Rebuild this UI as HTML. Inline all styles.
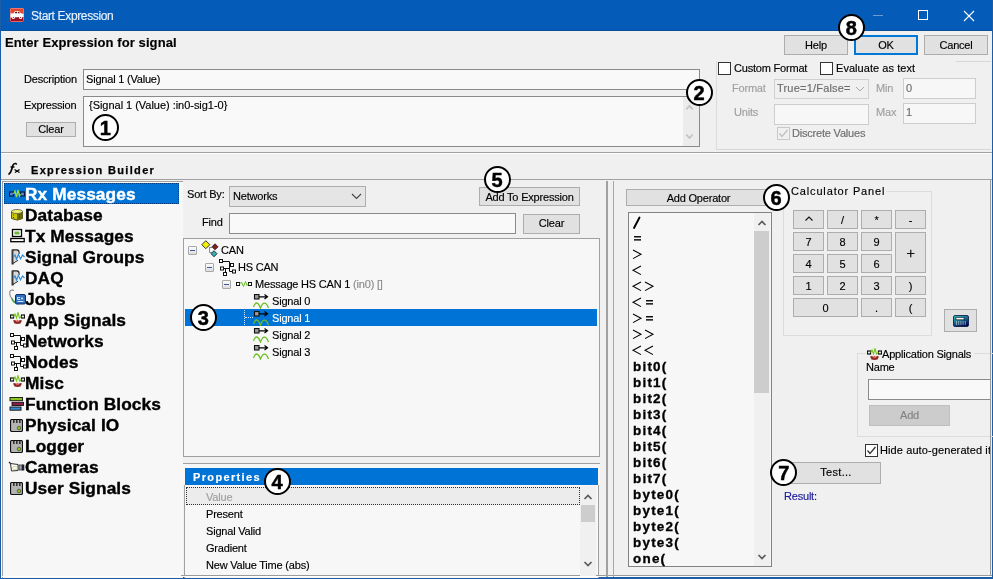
<!DOCTYPE html>
<html><head><meta charset="utf-8">
<style>
*{box-sizing:border-box;margin:0;padding:0}
html,body{width:993px;height:579px;overflow:hidden;background:#f0f0f0;font-family:"Liberation Sans",sans-serif;font-size:11px;color:#000}
.a{position:absolute}
body{will-change:transform}
.tx{position:absolute;white-space:nowrap;line-height:13px;font-size:11px;letter-spacing:-0.2px;-webkit-text-stroke:0.15px}
.btn{position:absolute;background:#e1e1e1;border:1px solid #adadad}
.inp{position:absolute;background:#f9f9f9;border:1px solid #8a8a8a}
.hl{position:absolute;background:#a0a0a0;height:1px}
.vl{position:absolute;background:#a0a0a0;width:1px}
.badge{position:absolute;width:27px;height:27px;border-radius:50%;border:2.5px solid #000;background:#fff;font:bold 20px "Liberation Sans",sans-serif;line-height:22px;padding-top:1px;text-align:center;color:#000;-webkit-text-stroke:0.5px #000}
.cb{position:absolute;width:13px;height:13px;border:1px solid #333;background:#fff}
</style></head><body>

<!-- window frame -->
<div class="a" style="left:0;top:0;width:993px;height:31px;background:#055cb8"></div><div class="a" style="left:0;top:30px;width:993px;height:1px;background:#0b4f9c"></div>
<div class="a" style="left:0;top:0;width:1px;height:579px;background:#1c5da8"></div>
<div class="a" style="left:992px;top:0;width:1px;height:579px;background:#1c5da8"></div>
<div class="a" style="left:0;top:577px;width:993px;height:2px;background:#1c5da8"></div>

<!-- title icon -->
<svg class="a" style="left:10px;top:8px" width="14" height="14" viewBox="0 0 14 14"><rect x="0" y="0" width="14" height="14" rx="1" fill="#e0482e"/><rect x="0" y="9" width="14" height="5" fill="#9c1020"/><rect x="0.5" y="0.5" width="13" height="13" rx="1" fill="none" stroke="#f08080" stroke-width="0.8"/><path d="M0.5 5.5L3.5 5.2L5 3L9 3L11 5.2L13.5 6L13.5 9L0.5 9.5Z" fill="#fff"/><path d="M5.5 3.7H7.2V5.3H4.6ZM8 3.7H9L10 5.3H8Z" fill="#5a1010"/><circle cx="3.3" cy="9.5" r="1.6" fill="#fff"/><circle cx="10.6" cy="9.5" r="1.6" fill="#fff"/><circle cx="3.3" cy="9.5" r="0.6" fill="#700"/><circle cx="10.6" cy="9.5" r="0.6" fill="#700"/></svg>
<div class="tx" style="left:31px;top:10px;font-size:12px;color:#e8f2ff;letter-spacing:-0.35px">Start Expression</div>
<div class="a" style="left:873px;top:15px;width:10px;height:1px;background:#6f9ad0"></div>
<div class="a" style="left:918px;top:10px;width:10px;height:10px;border:1px solid #fff"></div>


<!-- close X -->
<svg class="a" style="left:963px;top:10px" width="12" height="12" viewBox="0 0 12 12"><path d="M1 1L11 11M11 1L1 11" stroke="#fff" stroke-width="1.1"/></svg>

<!-- header -->
<div class="tx" style="left:5px;top:36px;font:bold 13px 'Liberation Sans';letter-spacing:0.1px;line-height:14px">Enter Expression for signal</div>
<div class="btn" style="left:784px;top:35px;width:64px;height:20px"></div>
<div class="tx" style="left:784px;top:39px;width:64px;text-align:center">Help</div>
<div class="btn" style="left:854px;top:35px;width:64px;height:20px;border:2px solid #0078d7"></div>
<div class="tx" style="left:854px;top:39px;width:64px;text-align:center">OK</div>
<div class="btn" style="left:924px;top:35px;width:64px;height:20px"></div>
<div class="tx" style="left:924px;top:39px;width:64px;text-align:center">Cancel</div>

<div class="tx" style="left:24px;top:73px">Description</div>
<div class="inp" style="left:83px;top:69px;width:617px;height:21px"></div>
<div class="tx" style="left:86px;top:73px">Signal 1 (Value)</div>
<div class="tx" style="left:24px;top:99px">Expression</div>
<div class="btn" style="left:26px;top:122px;width:50px;height:15px"></div>
<div class="tx" style="left:26px;top:123px;width:50px;text-align:center">Clear</div>
<div class="inp" style="left:83px;top:96px;width:617px;height:51px"></div>
<div class="a" style="left:683px;top:97px;width:16px;height:49px;background:#ececec"></div>
<svg class="a" style="left:684px;top:102px" width="12" height="10"><path d="M2.3 7.3L5.5 3.8L8.7 7.3" stroke="#c4c4c4" stroke-width="1.8" fill="none"/></svg>
<svg class="a" style="left:684px;top:131px" width="12" height="10"><path d="M2.3 3.5L5.5 7L8.7 3.5" stroke="#c4c4c4" stroke-width="1.8" fill="none"/></svg>
<div class="tx" style="left:89px;top:99px;letter-spacing:-0.03px">{Signal 1 (Value) :in0-sig1-0}</div>

<!-- format group -->
<div class="vl" style="left:716px;top:61px;height:89px;background:#dcdcdc"></div>
<div class="hl" style="left:716px;top:149px;width:275px;background:#d8d8d8"></div>
<div class="hl" style="left:956px;top:61px;width:35px;background:#d8d8d8"></div>
<div class="cb" style="left:718px;top:62px"></div>
<div class="tx" style="left:734px;top:62px">Custom Format</div>
<div class="cb" style="left:820px;top:62px"></div>
<div class="tx" style="left:836px;top:62px;letter-spacing:0.05px">Evaluate as text</div>
<div class="tx" style="left:732px;top:82px;color:#a0a0a0">Format</div>
<div class="inp" style="left:774px;top:79px;width:95px;height:20px;background:#f0f0f0;border-color:#d0d0d0"></div>
<div class="tx" style="left:777px;top:82px;color:#6d6d6d;letter-spacing:0.2px">True=1/False=</div>
<svg class="a" style="left:855px;top:85px" width="10" height="8"><path d="M1 2L5 6L9 2" stroke="#a8a8a8" stroke-width="1" fill="none"/></svg>
<div class="tx" style="left:876px;top:82px;color:#a0a0a0">Min</div>
<div class="inp" style="left:903px;top:78px;width:73px;height:21px;background:#f7f7f7;border-color:#cdcdcd"></div>
<div class="tx" style="left:906px;top:82px;color:#6d6d6d">0</div>
<div class="tx" style="left:734px;top:106px;color:#a0a0a0">Units</div>
<div class="inp" style="left:774px;top:104px;width:95px;height:21px;background:#f7f7f7;border-color:#cdcdcd"></div>
<div class="tx" style="left:876px;top:106px;color:#a0a0a0">Max</div>
<div class="inp" style="left:903px;top:103px;width:73px;height:21px;background:#f7f7f7;border-color:#cdcdcd"></div>
<div class="tx" style="left:906px;top:106px;color:#6d6d6d">1</div>
<div class="cb" style="left:777px;top:127px;border-color:#c8c8c8;background:#f0f0f0"></div>
<svg class="a" style="left:777px;top:127px" width="13" height="13"><path d="M2.5 6.5L5 9.5L10.5 3" stroke="#c0c0c0" stroke-width="1.3" fill="none"/></svg>
<div class="tx" style="left:792px;top:127px;color:#6d6d6d">Discrete Values</div>

<!-- separator -->
<div class="hl" style="left:1px;top:152px;width:991px;background:#a0a0a0"></div>
<div class="hl" style="left:1px;top:153px;width:991px;background:#fff"></div>

<!-- expression builder header -->
<svg class="a" style="left:7px;top:162px" width="15" height="14" viewBox="0 0 15 14"><path d="M1.5 12.5Q3.5 11.5 4.5 8L5.8 3.5Q6.6 1.3 8.5 1.5Q9.5 1.7 9.3 2.6" fill="none" stroke="#000" stroke-width="1.7"/><path d="M3.5 5H7.5" stroke="#000" stroke-width="1.4"/><path d="M7.5 7.5L12.5 10.5M12.5 7.5L8 10.5" stroke="#000" stroke-width="1.3"/></svg>
<div class="tx" style="left:31px;top:164px;font:bold 11px 'Liberation Sans';letter-spacing:1.33px;-webkit-text-stroke:0.25px">Expression Builder</div>
<div class="hl" style="left:1px;top:179px;width:991px;background:#a0a0a0"></div>

<!-- LEFT LIST -->
<div class="a" style="left:2px;top:181px;width:181px;height:397px;background:#f7f7f7;border-left:1px solid #a0a0a0;border-top:1px solid #a0a0a0"></div>
<div class="a" style="left:1px;top:180px;width:1px;height:398px;background:#fff"></div>
<div class="a" style="left:4px;top:183px;width:175px;height:21px;background:#0074d6;outline:1px dotted #003a80;outline-offset:-1px"></div>
<div class="tx" style="left:25px;top:187px;font:bold 16px 'Liberation Sans';line-height:16px;letter-spacing:0.1px;-webkit-text-stroke:0.35px;transform:scaleX(1.08);transform-origin:0 0;color:#fff">Rx Messages</div>
<div class="tx" style="left:25px;top:208px;font:bold 16px 'Liberation Sans';line-height:16px;letter-spacing:0.1px;-webkit-text-stroke:0.35px;transform:scaleX(1.08);transform-origin:0 0;color:#000">Database</div>
<div class="tx" style="left:25px;top:229px;font:bold 16px 'Liberation Sans';line-height:16px;letter-spacing:0.1px;-webkit-text-stroke:0.35px;transform:scaleX(1.08);transform-origin:0 0;color:#000">Tx Messages</div>
<div class="tx" style="left:25px;top:250px;font:bold 16px 'Liberation Sans';line-height:16px;letter-spacing:0.1px;-webkit-text-stroke:0.35px;transform:scaleX(1.08);transform-origin:0 0;color:#000">Signal Groups</div>
<div class="tx" style="left:25px;top:271px;font:bold 16px 'Liberation Sans';line-height:16px;letter-spacing:0.1px;-webkit-text-stroke:0.35px;transform:scaleX(1.08);transform-origin:0 0;color:#000">DAQ</div>
<div class="tx" style="left:25px;top:292px;font:bold 16px 'Liberation Sans';line-height:16px;letter-spacing:0.1px;-webkit-text-stroke:0.35px;transform:scaleX(1.08);transform-origin:0 0;color:#000">Jobs</div>
<div class="tx" style="left:25px;top:313px;font:bold 16px 'Liberation Sans';line-height:16px;letter-spacing:0.1px;-webkit-text-stroke:0.35px;transform:scaleX(1.08);transform-origin:0 0;color:#000">App Signals</div>
<div class="tx" style="left:25px;top:334px;font:bold 16px 'Liberation Sans';line-height:16px;letter-spacing:0.1px;-webkit-text-stroke:0.35px;transform:scaleX(1.08);transform-origin:0 0;color:#000">Networks</div>
<div class="tx" style="left:25px;top:355px;font:bold 16px 'Liberation Sans';line-height:16px;letter-spacing:0.1px;-webkit-text-stroke:0.35px;transform:scaleX(1.08);transform-origin:0 0;color:#000">Nodes</div>
<div class="tx" style="left:25px;top:376px;font:bold 16px 'Liberation Sans';line-height:16px;letter-spacing:0.1px;-webkit-text-stroke:0.35px;transform:scaleX(1.08);transform-origin:0 0;color:#000">Misc</div>
<div class="tx" style="left:25px;top:397px;font:bold 16px 'Liberation Sans';line-height:16px;letter-spacing:0.1px;-webkit-text-stroke:0.35px;transform:scaleX(1.08);transform-origin:0 0;color:#000">Function Blocks</div>
<div class="tx" style="left:25px;top:418px;font:bold 16px 'Liberation Sans';line-height:16px;letter-spacing:0.1px;-webkit-text-stroke:0.35px;transform:scaleX(1.08);transform-origin:0 0;color:#000">Physical IO</div>
<div class="tx" style="left:25px;top:439px;font:bold 16px 'Liberation Sans';line-height:16px;letter-spacing:0.1px;-webkit-text-stroke:0.35px;transform:scaleX(1.08);transform-origin:0 0;color:#000">Logger</div>
<div class="tx" style="left:25px;top:460px;font:bold 16px 'Liberation Sans';line-height:16px;letter-spacing:0.1px;-webkit-text-stroke:0.35px;transform:scaleX(1.08);transform-origin:0 0;color:#000">Cameras</div>
<div class="tx" style="left:25px;top:481px;font:bold 16px 'Liberation Sans';line-height:16px;letter-spacing:0.1px;-webkit-text-stroke:0.35px;transform:scaleX(1.08);transform-origin:0 0;color:#000">User Signals</div>

<!-- MIDDLE -->
<div class="tx" style="left:187px;top:188px">Sort By:</div>
<div class="btn" style="left:229px;top:186px;width:137px;height:21px;background:#e5e5e5"></div>
<div class="tx" style="left:233px;top:190px">Networks</div>
<svg class="a" style="left:351px;top:193px" width="11" height="7"><path d="M1 1L5.5 5.5L10 1" stroke="#444" stroke-width="1.1" fill="none"/></svg>
<div class="btn" style="left:479px;top:187px;width:101px;height:19px"></div>
<div class="tx" style="left:479px;top:191px;width:101px;text-align:center">Add To Expression</div>
<div class="tx" style="left:202px;top:216px">Find</div>
<div class="inp" style="left:229px;top:213px;width:287px;height:21px"></div>
<div class="btn" style="left:523px;top:214px;width:57px;height:20px"></div>
<div class="tx" style="left:523px;top:217px;width:57px;text-align:center">Clear</div>

<div class="inp" style="left:183px;top:238px;width:417px;height:219px;background:#f7f7f7;border-color:#a0a0a0"></div>
<div class="a" style="left:185px;top:309px;width:412px;height:17px;background:#0074d6"></div><div class="a" style="left:244px;top:310px;width:0;height:15px;border-left:1px dotted #cfe6ff"></div><div class="a" style="left:245px;top:317px;width:8px;height:0;border-top:1px dotted #cfe6ff"></div>
<div class="a" style="left:188px;top:246px;width:9px;height:9px;border:1px solid #a8a8a8;border-radius:1px;background:linear-gradient(#fdfdfd,#dcdcdc)"></div><div class="a" style="left:190px;top:250px;width:5px;height:1px;background:#3a5a9a"></div>
<div class="tx" style="left:221px;top:244px;color:#000">CAN</div>
<div class="a" style="left:205px;top:263px;width:9px;height:9px;border:1px solid #a8a8a8;border-radius:1px;background:linear-gradient(#fdfdfd,#dcdcdc)"></div><div class="a" style="left:207px;top:267px;width:5px;height:1px;background:#3a5a9a"></div>
<div class="tx" style="left:238px;top:261px;color:#000">HS CAN</div>
<div class="a" style="left:222px;top:280px;width:9px;height:9px;border:1px solid #a8a8a8;border-radius:1px;background:linear-gradient(#fdfdfd,#dcdcdc)"></div><div class="a" style="left:224px;top:284px;width:5px;height:1px;background:#3a5a9a"></div>
<div class="tx" style="left:255px;top:278px;color:#000">Message HS CAN 1 <span style="color:#8a8a8a">(in0) []</span></div>
<div class="tx" style="left:272px;top:295px;color:#000">Signal 0</div>
<div class="tx" style="left:272px;top:312px;color:#fff">Signal 1</div>
<div class="tx" style="left:272px;top:329px;color:#000">Signal 2</div>
<div class="tx" style="left:272px;top:346px;color:#000">Signal 3</div>

<div class="hl" style="left:183px;top:463px;width:417px;background:#a0a0a0"></div>
<div class="a" style="left:183px;top:464px;width:417px;height:21px;background:#f7f7f7"></div>
<div class="a" style="left:185px;top:468px;width:413px;height:17px;background:#0074d6"></div>
<div class="tx" style="left:193px;top:471px;font:bold 11px 'Liberation Sans';letter-spacing:1.35px;color:#fff">Properties</div>
<div class="a" style="left:184px;top:485px;width:415px;height:93px;background:#f7f7f7;border-left:1px solid #a0a0a0;border-right:1px solid #a0a0a0"></div>
<div class="a" style="left:186px;top:487px;width:394px;height:18px;background:#ececec;outline:1px dotted #333;outline-offset:-1px"></div>
<div class="tx" style="left:206px;top:491px;color:#a0a0a0">Value</div>
<div class="tx" style="left:206px;top:508px">Present</div>
<div class="tx" style="left:206px;top:525px">Signal Valid</div>
<div class="tx" style="left:206px;top:542px">Gradient</div>
<div class="tx" style="left:206px;top:559px">New Value Time (abs)</div>
<div class="hl" style="left:181px;top:575px;width:811px;background:#9a9a9a"></div>
<div class="hl" style="left:1px;top:576px;width:991px;background:#fff"></div>
<div class="a" style="left:580px;top:486px;width:16px;height:90px;background:#f0f0f0"></div>
<div class="a" style="left:581px;top:505px;width:14px;height:17px;background:#cdcdcd"></div>
<svg class="a" style="left:583px;top:493px" width="10" height="8"><path d="M1.5 6L5 2.5L8.5 6" stroke="#5a5a5a" stroke-width="1.7" fill="none"/></svg>
<svg class="a" style="left:583px;top:560px" width="10" height="8"><path d="M1.5 2L5 5.5L8.5 2" stroke="#5a5a5a" stroke-width="1.7" fill="none"/></svg>

<!-- splitter -->
<div class="vl" style="left:606px;top:181px;width:2px;height:396px;background:#a0a0a0"></div>
<div class="vl" style="left:613px;top:181px;height:396px;background:#a8a8a8"></div>

<!-- RIGHT -->
<div class="btn" style="left:626px;top:189px;width:145px;height:17px"></div>
<div class="tx" style="left:626px;top:192px;width:145px;text-align:center">Add Operator</div>
<div class="inp" style="left:628px;top:212px;width:144px;height:355px;background:#f7f7f7;border-color:#828282"></div>
<div class="a" style="left:754px;top:213px;width:16px;height:353px;background:#f0f0f0"></div>
<div class="a" style="left:754px;top:231px;width:15px;height:162px;background:#cdcdcd"></div>
<svg class="a" style="left:757px;top:219px" width="10" height="8"><path d="M1.5 6L5 2.5L8.5 6" stroke="#5a5a5a" stroke-width="1.7" fill="none"/></svg>
<svg class="a" style="left:757px;top:553px" width="10" height="8"><path d="M1.5 2L5 5.5L8.5 2" stroke="#5a5a5a" stroke-width="1.7" fill="none"/></svg>
<div class="tx" style="left:633px;top:361px;font:bold 12px 'Liberation Sans';line-height:13px;letter-spacing:1.1px;-webkit-text-stroke:0.3px;transform:scaleX(1.12);transform-origin:0 0">bit0(</div>
<div class="tx" style="left:633px;top:377px;font:bold 12px 'Liberation Sans';line-height:13px;letter-spacing:1.1px;-webkit-text-stroke:0.3px;transform:scaleX(1.12);transform-origin:0 0">bit1(</div>
<div class="tx" style="left:633px;top:393px;font:bold 12px 'Liberation Sans';line-height:13px;letter-spacing:1.1px;-webkit-text-stroke:0.3px;transform:scaleX(1.12);transform-origin:0 0">bit2(</div>
<div class="tx" style="left:633px;top:409px;font:bold 12px 'Liberation Sans';line-height:13px;letter-spacing:1.1px;-webkit-text-stroke:0.3px;transform:scaleX(1.12);transform-origin:0 0">bit3(</div>
<div class="tx" style="left:633px;top:425px;font:bold 12px 'Liberation Sans';line-height:13px;letter-spacing:1.1px;-webkit-text-stroke:0.3px;transform:scaleX(1.12);transform-origin:0 0">bit4(</div>
<div class="tx" style="left:633px;top:441px;font:bold 12px 'Liberation Sans';line-height:13px;letter-spacing:1.1px;-webkit-text-stroke:0.3px;transform:scaleX(1.12);transform-origin:0 0">bit5(</div>
<div class="tx" style="left:633px;top:457px;font:bold 12px 'Liberation Sans';line-height:13px;letter-spacing:1.1px;-webkit-text-stroke:0.3px;transform:scaleX(1.12);transform-origin:0 0">bit6(</div>
<div class="tx" style="left:633px;top:473px;font:bold 12px 'Liberation Sans';line-height:13px;letter-spacing:1.1px;-webkit-text-stroke:0.3px;transform:scaleX(1.12);transform-origin:0 0">bit7(</div>
<div class="tx" style="left:633px;top:489px;font:bold 12px 'Liberation Sans';line-height:13px;letter-spacing:1.1px;-webkit-text-stroke:0.3px;transform:scaleX(1.12);transform-origin:0 0">byte0(</div>
<div class="tx" style="left:633px;top:505px;font:bold 12px 'Liberation Sans';line-height:13px;letter-spacing:1.1px;-webkit-text-stroke:0.3px;transform:scaleX(1.12);transform-origin:0 0">byte1(</div>
<div class="tx" style="left:633px;top:521px;font:bold 12px 'Liberation Sans';line-height:13px;letter-spacing:1.1px;-webkit-text-stroke:0.3px;transform:scaleX(1.12);transform-origin:0 0">byte2(</div>
<div class="tx" style="left:633px;top:537px;font:bold 12px 'Liberation Sans';line-height:13px;letter-spacing:1.1px;-webkit-text-stroke:0.3px;transform:scaleX(1.12);transform-origin:0 0">byte3(</div>
<div class="tx" style="left:633px;top:553px;font:bold 12px 'Liberation Sans';line-height:13px;letter-spacing:1.1px;-webkit-text-stroke:0.3px;transform:scaleX(1.12);transform-origin:0 0">one(</div>

<svg class="a" style="left:0;top:0" width="993" height="579"><g fill="none" stroke="#000" stroke-width="1.05"><path d="M634 228L639.5 217.5" stroke-width="1.9" stroke-linecap="round"/><rect x="634" y="236.0" width="7" height="1.5" stroke="none" fill="#111"/><rect x="634" y="239.10000000000002" width="7" height="1.5" stroke="none" fill="#111"/><path d="M633 250.0L641 254.3L633 258.6"/><path d="M641 266.0L633 270.3L641 274.6"/><path d="M641 282.0L633 286.3L641 290.6"/><path d="M645 282.0L653 286.3L645 290.6"/><path d="M641 298.0L633 302.3L641 306.6"/><rect x="646" y="300.0" width="7" height="1.5" stroke="none" fill="#111"/><rect x="646" y="303.1" width="7" height="1.5" stroke="none" fill="#111"/><path d="M633 314.0L641 318.3L633 322.6"/><rect x="646" y="316.0" width="7" height="1.5" stroke="none" fill="#111"/><rect x="646" y="319.1" width="7" height="1.5" stroke="none" fill="#111"/><path d="M633 330.0L641 334.3L633 338.6"/><path d="M645 330.0L653 334.3L645 338.6"/><path d="M641 346.0L633 350.3L641 354.6"/><path d="M653 346.0L645 350.3L653 354.6"/></g></svg>
<!-- calculator -->
<div class="a" style="left:783px;top:191px;width:149px;height:145px;border:1px solid #dcdcdc"></div>
<div class="tx" style="left:790px;top:185px;padding:0 1px;background:#f0f0f0;letter-spacing:0.85px">Calculator Panel</div>
<div class="btn" style="left:793px;top:210px;width:31px;height:19px"></div><svg class="a" style="left:804px;top:215px" width="10" height="7"><path d="M1.5 5.5L5 2L8.5 5.5" stroke="#111" stroke-width="1.1" fill="none"/></svg>
<div class="btn" style="left:827px;top:210px;width:31px;height:19px"></div><div class="tx" style="left:827px;top:214px;width:31px;text-align:center">/</div>
<div class="btn" style="left:861px;top:210px;width:31px;height:19px"></div><div class="tx" style="left:861px;top:214px;width:31px;text-align:center">*</div>
<div class="btn" style="left:895px;top:210px;width:31px;height:19px"></div><div class="tx" style="left:895px;top:214px;width:31px;text-align:center">-</div>
<div class="btn" style="left:793px;top:232px;width:31px;height:19px"></div><div class="tx" style="left:793px;top:236px;width:31px;text-align:center">7</div>
<div class="btn" style="left:827px;top:232px;width:31px;height:19px"></div><div class="tx" style="left:827px;top:236px;width:31px;text-align:center">8</div>
<div class="btn" style="left:861px;top:232px;width:31px;height:19px"></div><div class="tx" style="left:861px;top:236px;width:31px;text-align:center">9</div>
<div class="btn" style="left:895px;top:232px;width:31px;height:41px"></div><svg class="a" style="left:906px;top:249px" width="10" height="10"><path d="M1 4.5H8.5M4.75 0.8V8.3" stroke="#111" stroke-width="1.2" fill="none"/></svg>
<div class="btn" style="left:793px;top:254px;width:31px;height:19px"></div><div class="tx" style="left:793px;top:258px;width:31px;text-align:center">4</div>
<div class="btn" style="left:827px;top:254px;width:31px;height:19px"></div><div class="tx" style="left:827px;top:258px;width:31px;text-align:center">5</div>
<div class="btn" style="left:861px;top:254px;width:31px;height:19px"></div><div class="tx" style="left:861px;top:258px;width:31px;text-align:center">6</div>
<div class="btn" style="left:793px;top:276px;width:31px;height:19px"></div><div class="tx" style="left:793px;top:280px;width:31px;text-align:center">1</div>
<div class="btn" style="left:827px;top:276px;width:31px;height:19px"></div><div class="tx" style="left:827px;top:280px;width:31px;text-align:center">2</div>
<div class="btn" style="left:861px;top:276px;width:31px;height:19px"></div><div class="tx" style="left:861px;top:280px;width:31px;text-align:center">3</div>
<div class="btn" style="left:895px;top:276px;width:31px;height:19px"></div><div class="tx" style="left:895px;top:280px;width:31px;text-align:center">)</div>
<div class="btn" style="left:793px;top:298px;width:65px;height:19px"></div><div class="tx" style="left:793px;top:302px;width:65px;text-align:center">0</div>
<div class="btn" style="left:861px;top:298px;width:31px;height:19px"></div><div class="tx" style="left:861px;top:302px;width:31px;text-align:center">.</div>
<div class="btn" style="left:895px;top:298px;width:31px;height:19px"></div><div class="tx" style="left:895px;top:302px;width:31px;text-align:center">(</div>

<div class="btn" style="left:944px;top:309px;width:33px;height:23px"></div>
<svg class="a" style="left:953px;top:315px" width="16" height="12" viewBox="0 0 16 12"><defs><linearGradient id="cg" x1="0" y1="0" x2="0.6" y2="1"><stop offset="0" stop-color="#38c8c8"/><stop offset="0.5" stop-color="#1a7090"/><stop offset="1" stop-color="#000a50"/></linearGradient></defs><rect x="0.5" y="0.5" width="15" height="11" rx="1.5" fill="url(#cg)" stroke="#001040" stroke-width="0.8"/><rect x="3" y="2.5" width="8" height="2.3" fill="#fff" stroke="#000" stroke-width="0.5"/><path d="M3 7H13M3 9H13" stroke="#fff" stroke-width="1" stroke-dasharray="1 1.2"/></svg>

<!-- app signals -->
<div class="a" style="left:857px;top:353px;width:140px;height:84px;border:1px solid #dcdcdc"></div>
<div class="a" style="left:866px;top:347px;width:108px;height:14px;background:#f0f0f0"></div><svg class="a" style="left:867px;top:348px" width="15" height="13" viewBox="0 0 15 13"><rect x="0.5" y="3" width="3" height="3" fill="#fff" stroke="#111" stroke-width="1.2"/><rect x="11.5" y="3" width="3" height="3" fill="#fff" stroke="#111" stroke-width="1.2"/><path d="M3.5 4.5L5 2L6.5 6L8 0.5L9.5 6L11.5 4.5" fill="none" stroke="#7ac51c" stroke-width="1.1"/><path d="M3 8.5L5 8L7.5 10L10 8L12 8.5L10.5 11.5L7.5 12L4.5 11.5Z" fill="#8a2a22"/><circle cx="7.5" cy="9" r="1.2" fill="#e55"/></svg><div class="tx" style="left:882px;top:348px">Application Signals</div>
<div class="tx" style="left:866px;top:361px">Name</div>
<div class="inp" style="left:868px;top:379px;width:123px;height:21px"></div>
<div class="btn" style="left:869px;top:405px;width:81px;height:21px;background:#cccccc;border-color:#bfbfbf"></div>
<div class="tx" style="left:869px;top:409px;width:81px;text-align:center;color:#838383">Add</div>
<div class="cb" style="left:865px;top:444px"></div>
<svg class="a" style="left:865px;top:444px" width="13" height="13"><path d="M2.5 6.5L5 9.5L10.5 3" stroke="#333" stroke-width="1.3" fill="none"/></svg>
<div class="a" style="left:880px;top:440px;width:110px;height:20px;overflow:hidden"><div class="tx" style="left:0;top:4px;letter-spacing:0.1px">Hide auto-generated items</div></div>
<div class="vl" style="left:990px;top:180px;height:396px;background:#9a9a9a"></div>

<div class="btn" style="left:791px;top:462px;width:90px;height:22px"></div>
<div class="tx" style="left:791px;top:466px;width:90px;text-align:center;letter-spacing:0.3px">Test...</div>
<div class="tx" style="left:784px;top:490px;color:#1a1a9a">Result:</div>

<!-- icons -->
<svg class="a" style="left:9px;top:189px" width="16" height="10" viewBox="0 0 16 10"><rect x="0.5" y="3" width="4" height="4" fill="#5a8bd0" stroke="#001a4a" stroke-width="1.2"/><rect x="11.5" y="3" width="4" height="4" fill="#5a8bd0" stroke="#001a4a" stroke-width="1.2"/><path d="M4.5 5L6 2L7.5 8L9 1L10.5 7L11.5 5" fill="none" stroke="#9be03a" stroke-width="1.2"/></svg>
<svg class="a" style="left:11px;top:209px" width="12" height="12" viewBox="0 0 12 12"><path d="M0.5 2.5V9.5Q6 12.5 11.5 9.5V2.5" fill="#c8c800" stroke="#333" stroke-width="0.8"/><path d="M6 3V11.5Q9 11 11.5 9.5V2.5Z" fill="#6b6b00"/><ellipse cx="6" cy="2.5" rx="5.5" ry="2" fill="#f0f070" stroke="#555" stroke-width="0.8"/><path d="M2 6L3 6M2 8.5L3 8.5M8 5.5L9 5.5M8 8L9 8" stroke="#222" stroke-width="0.8"/></svg>
<svg class="a" style="left:10px;top:228px" width="15" height="15" viewBox="0 0 15 15"><rect x="2.5" y="1.5" width="9" height="7" fill="#fff" stroke="#000" stroke-width="1.3"/><rect x="4.5" y="3.5" width="5" height="3" fill="#6cb33a"/><rect x="0.8" y="10.5" width="13.4" height="3.2" fill="#fff" stroke="#000" stroke-width="1.3"/></svg>
<svg class="a" style="left:11px;top:249px" width="14" height="16" viewBox="0 0 14 16"><path d="M1.5 1H6Q8 1 8 3.5V5" fill="none" stroke="#2a2a2a" stroke-width="1.3"/><path d="M1.5 14.5L7 11" fill="none" stroke="#2a2a2a" stroke-width="1.3"/><rect x="0.5" y="0.5" width="2.2" height="15" fill="#3a3a3a"/><path d="M2.7 1.7H6Q7.3 1.7 7.3 3.5V10.5L2.7 13.5Z" fill="#d8d8d8"/><path d="M2.5 8L4 6L5.5 10L7.5 5.5L9.5 10L11.5 6L13.5 8" fill="none" stroke="#2b8bdb" stroke-width="1.1"/></svg>
<svg class="a" style="left:11px;top:270px" width="14" height="16" viewBox="0 0 14 16"><path d="M1.5 1H6Q8 1 8 3.5V5" fill="none" stroke="#2a2a2a" stroke-width="1.3"/><path d="M1.5 14.5L7 11" fill="none" stroke="#2a2a2a" stroke-width="1.3"/><rect x="0.5" y="0.5" width="2.2" height="15" fill="#3a3a3a"/><path d="M2.7 1.7H6Q7.3 1.7 7.3 3.5V10.5L2.7 13.5Z" fill="#d8d8d8"/><path d="M2.5 8L4 6L5.5 10L7.5 5.5L9.5 10L11.5 6L13.5 8" fill="none" stroke="#2b8bdb" stroke-width="1.1"/></svg>
<svg class="a" style="left:9px;top:289px" width="17" height="16" viewBox="0 0 17 16"><path d="M1 2Q0 6 2.5 9Q4.5 12 7 14" fill="none" stroke="#888" stroke-width="1.1"/><path d="M2.5 9Q4 14 9 15" fill="none" stroke="#3caa3c" stroke-width="1.1"/><path d="M1 2Q3 0 5 1.5" fill="none" stroke="#777" stroke-width="1"/><rect x="6.5" y="5.5" width="10" height="9.5" rx="1.5" fill="#2f6fc0" stroke="#0e2e6a" stroke-width="1"/><path d="M8.5 8.5H11M8.5 8.5V10.5H11M12 10.5L13 8.5L14 10.5M8.5 12.5H14.5" stroke="#e0ecff" stroke-width="0.9" fill="none"/></svg>
<svg class="a" style="left:10px;top:312px" width="15" height="13" viewBox="0 0 15 13"><rect x="0.5" y="3" width="3" height="3" fill="#fff" stroke="#111" stroke-width="1.2"/><rect x="11.5" y="3" width="3" height="3" fill="#fff" stroke="#111" stroke-width="1.2"/><path d="M3.5 4.5L5 2L6.5 6L8 0.5L9.5 6L11.5 4.5" fill="none" stroke="#7ac51c" stroke-width="1.1"/><path d="M3 8.5L5 8L7.5 10L10 8L12 8.5L10.5 11.5L7.5 12L4.5 11.5Z" fill="#8a2a22"/><circle cx="7.5" cy="9" r="1.2" fill="#e55"/></svg>
<svg class="a" style="left:10px;top:375px" width="15" height="13" viewBox="0 0 15 13"><rect x="0.5" y="3" width="3" height="3" fill="#fff" stroke="#111" stroke-width="1.2"/><rect x="11.5" y="3" width="3" height="3" fill="#fff" stroke="#111" stroke-width="1.2"/><path d="M3.5 4.5L5 2L6.5 6L8 0.5L9.5 6L11.5 4.5" fill="none" stroke="#7ac51c" stroke-width="1.1"/><path d="M3 8.5L5 8L7.5 10L10 8L12 8.5L10.5 11.5L7.5 12L4.5 11.5Z" fill="#8a2a22"/><circle cx="7.5" cy="9" r="1.2" fill="#e55"/></svg>
<svg class="a" style="left:10px;top:333px" width="17" height="17" viewBox="0 0 17 17"><g fill="none" stroke="#111" stroke-width="1"><path d="M3.5 2.5H10.5V12.5M10.5 6.5H11.5M4.5 9.5H10.5M10.5 12.5H13.5M6.5 9.5V13.5"/></g><g fill="#fff" stroke="#111" stroke-width="1"><rect x="0.5" y="0.5" width="3" height="3"/><rect x="11.5" y="4.5" width="3" height="3"/><rect x="1.5" y="8" width="3" height="3"/><rect x="13.5" y="11" width="3" height="3"/><rect x="4.5" y="13.5" width="3" height="3"/></g></svg>
<svg class="a" style="left:10px;top:354px" width="17" height="17" viewBox="0 0 17 17"><g fill="none" stroke="#111" stroke-width="1"><path d="M3.5 2.5H10.5V12.5M10.5 6.5H11.5M4.5 9.5H10.5M10.5 12.5H13.5M6.5 9.5V13.5"/></g><g fill="#fff" stroke="#111" stroke-width="1"><rect x="0.5" y="0.5" width="3" height="3"/><rect x="11.5" y="4.5" width="3" height="3"/><rect x="1.5" y="8" width="3" height="3"/><rect x="13.5" y="11" width="3" height="3"/><rect x="4.5" y="13.5" width="3" height="3"/></g></svg>
<svg class="a" style="left:9px;top:396px" width="16" height="16" viewBox="0 0 16 16"><rect x="1" y="1.5" width="12.5" height="3.2" fill="#8fc420" stroke="#111" stroke-width="0.9"/><rect x="3" y="6.3" width="11.5" height="3.2" fill="#8a1c48" stroke="#111" stroke-width="0.9"/><rect x="1" y="11" width="11" height="3.2" fill="#3a86d0" stroke="#111" stroke-width="0.9"/></svg>
<svg class="a" style="left:10px;top:419px" width="13" height="13" viewBox="0 0 13 13"><rect x="0.5" y="0.5" width="12" height="12" rx="1.5" fill="#b4b4b4" stroke="#111" stroke-width="1.2"/><rect x="3" y="1" width="1.6" height="3" fill="#333"/><rect x="6" y="1" width="1.6" height="3" fill="#333"/><rect x="9" y="1" width="1.6" height="3" fill="#333"/><circle cx="9" cy="9" r="1.8" fill="#8cc21a" stroke="#333" stroke-width="0.6"/></svg>
<svg class="a" style="left:10px;top:440px" width="13" height="13" viewBox="0 0 13 13"><rect x="0.5" y="0.5" width="12" height="12" rx="1.5" fill="#b4b4b4" stroke="#111" stroke-width="1.2"/><rect x="3" y="1" width="1.6" height="3" fill="#333"/><rect x="6" y="1" width="1.6" height="3" fill="#333"/><rect x="9" y="1" width="1.6" height="3" fill="#333"/><circle cx="9" cy="9" r="1.8" fill="#8cc21a" stroke="#333" stroke-width="0.6"/></svg>
<svg class="a" style="left:10px;top:482px" width="13" height="13" viewBox="0 0 13 13"><rect x="0.5" y="0.5" width="12" height="12" rx="1.5" fill="#b4b4b4" stroke="#111" stroke-width="1.2"/><rect x="3" y="1" width="1.6" height="3" fill="#333"/><rect x="6" y="1" width="1.6" height="3" fill="#333"/><rect x="9" y="1" width="1.6" height="3" fill="#333"/><circle cx="9" cy="9" r="1.8" fill="#8cc21a" stroke="#333" stroke-width="0.6"/></svg>
<svg class="a" style="left:8px;top:461px" width="17" height="11" viewBox="0 0 17 11"><path d="M1 1L3 3" stroke="#223" stroke-width="1.2"/><path d="M2.5 2.5L10 3.5V9.5L3.5 10Z" fill="#fff" stroke="#333" stroke-width="1"/><ellipse cx="7" cy="7" rx="2.5" ry="1.5" fill="none" stroke="#cc8" stroke-width="0.8"/><rect x="11" y="4" width="3" height="5" fill="#9aa8c8" stroke="#333" stroke-width="0.8"/><rect x="14" y="3.5" width="2.3" height="6" fill="#222"/></svg>
<svg class="a" style="left:201px;top:240px" width="18" height="18" viewBox="0 0 18 18"><path d="M8.5 7V12.5H11.5M8.5 7.5H11" stroke="#8a8a8a" stroke-width="1" fill="none"/><path d="M0.8 4.7L4.8 0.7L8.8 4.7L4.8 8.7Z" fill="#f0f000" stroke="#222" stroke-width="0.9"/><path d="M11 6.8L14 3.8L17 6.8L14 9.8Z" fill="#8a1a1a" stroke="#222" stroke-width="0.9"/><path d="M10 13.7L13 10.7L16 13.7L13 16.7Z" fill="#30b0b8" stroke="#222" stroke-width="0.9"/></svg>
<svg class="a" style="left:219px;top:259px" width="17" height="17" viewBox="0 0 17 17"><g fill="none" stroke="#111" stroke-width="1"><path d="M3.5 2.5H10.5V12.5M10.5 6.5H11.5M4.5 9.5H10.5M10.5 12.5H13.5M6.5 9.5V13.5"/></g><g fill="#fff" stroke="#111" stroke-width="1"><rect x="0.5" y="0.5" width="3" height="3"/><rect x="11.5" y="4.5" width="3" height="3"/><rect x="1.5" y="8" width="3" height="3"/><rect x="13.5" y="11" width="3" height="3"/><rect x="4.5" y="13.5" width="3" height="3"/></g></svg>
<svg class="a" style="left:236px;top:281px" width="17" height="7" viewBox="0 0 17 7"><rect x="0.5" y="1.5" width="3" height="3" fill="#fff" stroke="#111" stroke-width="1"/><rect x="12.5" y="1.5" width="3" height="3" fill="#fff" stroke="#111" stroke-width="1"/><path d="M3.5 3L5.5 1L7.5 5.5L9.5 0.5L11 4.5L12.5 3" fill="none" stroke="#60c020" stroke-width="1"/></svg>
<svg class="a" style="left:253px;top:294px" width="16" height="15" viewBox="0 0 16 15"><rect x="1.5" y="0.5" width="4.5" height="4.5" fill="#999" stroke="#111" stroke-width="1.1"/><path d="M6 2.8H14M11.5 0.5L14.5 2.8L11.5 5" fill="none" stroke="#000" stroke-width="1.2"/><path d="M0.5 13C2 7.5 5 7.5 7.5 14C10 7.5 13 7.5 15.5 14" fill="none" stroke="#6cc020" stroke-width="1.3"/></svg>
<svg class="a" style="left:253px;top:311px" width="16" height="15" viewBox="0 0 16 15"><rect x="1.5" y="0.5" width="4.5" height="4.5" fill="#999" stroke="#111" stroke-width="1.1"/><path d="M6 2.8H14M11.5 0.5L14.5 2.8L11.5 5" fill="none" stroke="#000" stroke-width="1.2"/><path d="M0.5 13C2 7.5 5 7.5 7.5 14C10 7.5 13 7.5 15.5 14" fill="none" stroke="#6cc020" stroke-width="1.3"/></svg>
<svg class="a" style="left:253px;top:328px" width="16" height="15" viewBox="0 0 16 15"><rect x="1.5" y="0.5" width="4.5" height="4.5" fill="#999" stroke="#111" stroke-width="1.1"/><path d="M6 2.8H14M11.5 0.5L14.5 2.8L11.5 5" fill="none" stroke="#000" stroke-width="1.2"/><path d="M0.5 13C2 7.5 5 7.5 7.5 14C10 7.5 13 7.5 15.5 14" fill="none" stroke="#6cc020" stroke-width="1.3"/></svg>
<svg class="a" style="left:253px;top:345px" width="16" height="15" viewBox="0 0 16 15"><rect x="1.5" y="0.5" width="4.5" height="4.5" fill="#999" stroke="#111" stroke-width="1.1"/><path d="M6 2.8H14M11.5 0.5L14.5 2.8L11.5 5" fill="none" stroke="#000" stroke-width="1.2"/><path d="M0.5 13C2 7.5 5 7.5 7.5 14C10 7.5 13 7.5 15.5 14" fill="none" stroke="#6cc020" stroke-width="1.3"/></svg>

<!-- badges -->
<div class="badge" style="left:91.7px;top:114.4px">1</div>
<div class="badge" style="left:685.5px;top:79.1px">2</div>
<div class="badge" style="left:189.8px;top:303.7px">3</div>
<div class="badge" style="left:263.5px;top:468.3px">4</div>
<div class="badge" style="left:483.6px;top:166.2px">5</div>
<div class="badge" style="left:762.5px;top:184.2px">6</div>
<div class="badge" style="left:770.2px;top:459.1px">7</div>
<div class="badge" style="left:837.7px;top:14.0px">8</div>

</body></html>
